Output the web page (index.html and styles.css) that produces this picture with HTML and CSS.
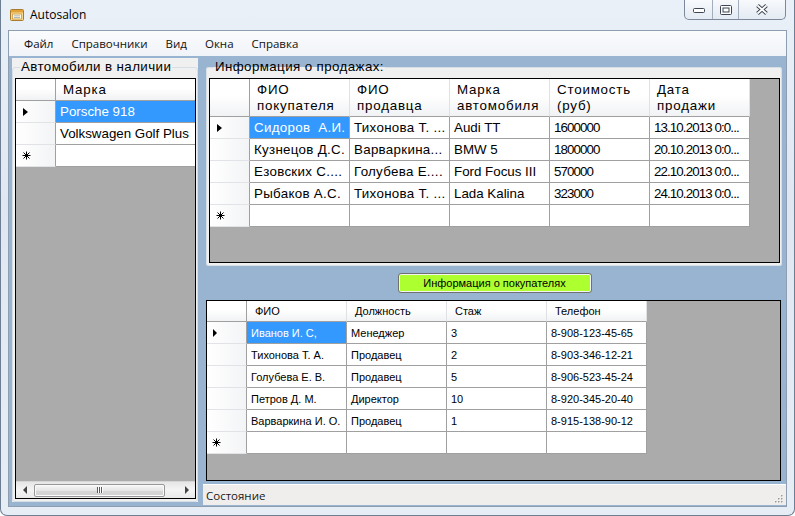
FILE: index.html
```html
<!DOCTYPE html>
<html lang="ru">
<head>
<meta charset="utf-8">
<title>Autosalon</title>
<link rel="stylesheet" href="styles.css">
</head>
<body>
<div class="window">
  <div class="titlebar">
    <svg class="app-icon" width="16" height="16" viewBox="0 0 16 16">
      <rect x="1.5" y="2.5" width="13" height="11" rx="1" fill="#f6d88c" stroke="#a97b2a"/>
      <rect x="2" y="3" width="12" height="2.5" fill="#e4a339"/>
      <rect x="3.5" y="7" width="9" height="5" fill="#fff6dc" stroke="#c99b45" stroke-width="0.8"/>
      <path d="M5 8.8h6M5 10.5h6" stroke="#9aa6b8" stroke-width="0.8"/>
    </svg>
    <span class="title">Autosalon</span>
    <div class="caption-btns">
      <div class="cbtn cbtn-min">
        <svg width="14" height="8" viewBox="0 0 14 8"><rect x="1.5" y="2.5" width="11" height="4" rx="1" fill="#fff" stroke="#3d4452"/></svg>
      </div>
      <div class="cbtn cbtn-max">
        <svg width="12" height="10" viewBox="0 0 12 10"><rect x="0.5" y="0.5" width="11" height="9" rx="1" fill="#fff" stroke="#3d4452"/><rect x="3" y="3" width="6" height="4" fill="#fff" stroke="#3d4452" stroke-width="1"/></svg>
      </div>
      <div class="cbtn cbtn-close">
        <svg width="14" height="11" viewBox="0 0 14 11"><path d="M2.5 1.5L11.5 9.5M11.5 1.5L2.5 9.5" stroke="#3d4452" stroke-width="3.8"/><path d="M2.5 1.5L11.5 9.5M11.5 1.5L2.5 9.5" stroke="#fff" stroke-width="1.8"/></svg>
      </div>
    </div>
  </div>

  <div class="client">
    <div class="menubar">
      <span class="menu-item">Файл</span>
      <span class="menu-item">Справочники</span>
      <span class="menu-item">Вид</span>
      <span class="menu-item">Окна</span>
      <span class="menu-item">Справка</span>
    </div>

    <div class="main">
      <div class="left">
        <fieldset class="group group-left">
          <legend>Автомобили в наличии</legend>
          <div class="dgv">
            <div class="grid grid-left">
              <div class="ch corner"></div>
              <div class="ch cyh">Марка</div>

              <div class="rh"><span class="cur"></span></div>
              <div class="c sel">Porsche 918</div>

              <div class="rh"></div>
              <div class="c">Volkswagen Golf Plus</div>

              <div class="rh"><svg class="star" width="9" height="9" viewBox="0 0 9 9"><path d="M4.5 0.5V8.5M0.5 4.5H8.5M1.5 1.5L7.5 7.5M7.5 1.5L1.5 7.5" stroke="#000" stroke-width="1"/></svg></div>
              <div class="c"></div>
            </div>
            <div class="hscroll">
              <div class="sb-btn"><span class="arr-l"></span></div>
              <div class="sb-track">
                <div class="sb-thumb"><span class="grip"></span><span class="grip"></span><span class="grip"></span></div>
              </div>
              <div class="sb-btn"><span class="arr-r"></span></div>
            </div>
          </div>
        </fieldset>
      </div>

      <div class="right">
        <fieldset class="group group-sales">
          <legend>Информация о продажах:</legend>
          <div class="dgv">
            <div class="grid grid-sales">
              <div class="ch corner"></div>
              <div class="ch cyh">ФИО<br>покупателя</div>
              <div class="ch cyh">ФИО<br>продавца</div>
              <div class="ch cyh">Марка<br>автомобиля</div>
              <div class="ch cyh">Стоимость<br>(руб)</div>
              <div class="ch cyh">Дата<br>продажи</div>

              <div class="rh"><span class="cur"></span></div>
              <div class="c cy sel">Сидоров&nbsp; А.И.</div>
              <div class="c cy">Тихонова Т. ...</div>
              <div class="c">Audi TT</div>
              <div class="c num">1600000</div>
              <div class="c num">13.10.2013 0:0...</div>

              <div class="rh"></div>
              <div class="c cy">Кузнецов Д.С.</div>
              <div class="c cy">Варваркина...</div>
              <div class="c">BMW 5</div>
              <div class="c num">1800000</div>
              <div class="c num">20.10.2013 0:0...</div>

              <div class="rh"></div>
              <div class="c cy">Езовских С....</div>
              <div class="c cy">Голубева Е....</div>
              <div class="c">Ford Focus III</div>
              <div class="c num">570000</div>
              <div class="c num">22.10.2013 0:0...</div>

              <div class="rh"></div>
              <div class="c cy">Рыбаков А.С.</div>
              <div class="c cy">Тихонова Т. ...</div>
              <div class="c">Lada Kalina</div>
              <div class="c num">323000</div>
              <div class="c num">24.10.2013 0:0...</div>

              <div class="rh"><svg class="star" width="9" height="9" viewBox="0 0 9 9"><path d="M4.5 0.5V8.5M0.5 4.5H8.5M1.5 1.5L7.5 7.5M7.5 1.5L1.5 7.5" stroke="#000" stroke-width="1"/></svg></div>
              <div class="c"></div>
              <div class="c"></div>
              <div class="c"></div>
              <div class="c"></div>
              <div class="c"></div>
            </div>
          </div>
        </fieldset>

        <div class="button-row">
          <button class="btn-green" type="button">Информация о покупателях</button>
        </div>

        <div class="dgv dgv-buyers">
          <div class="grid grid-buyers">
            <div class="ch corner"></div>
            <div class="ch">ФИО</div>
            <div class="ch">Должность</div>
            <div class="ch">Стаж</div>
            <div class="ch">Телефон</div>

            <div class="rh"><span class="cur cur-sm"></span></div>
            <div class="c sel">Иванов И. С,</div>
            <div class="c">Менеджер</div>
            <div class="c">3</div>
            <div class="c">8-908-123-45-65</div>

            <div class="rh"></div>
            <div class="c">Тихонова Т. А.</div>
            <div class="c">Продавец</div>
            <div class="c">2</div>
            <div class="c">8-903-346-12-21</div>

            <div class="rh"></div>
            <div class="c">Голубева Е. В.</div>
            <div class="c">Продавец</div>
            <div class="c">5</div>
            <div class="c">8-906-523-45-24</div>

            <div class="rh"></div>
            <div class="c">Петров Д. М.</div>
            <div class="c">Директор</div>
            <div class="c">10</div>
            <div class="c">8-920-345-20-40</div>

            <div class="rh"></div>
            <div class="c">Варваркина И. О.</div>
            <div class="c">Продавец</div>
            <div class="c">1</div>
            <div class="c">8-915-138-90-12</div>

            <div class="rh"><svg class="star" width="9" height="9" viewBox="0 0 9 9"><path d="M4.5 0.5V8.5M0.5 4.5H8.5M1.5 1.5L7.5 7.5M7.5 1.5L1.5 7.5" stroke="#000" stroke-width="1"/></svg></div>
            <div class="c"></div>
            <div class="c"></div>
            <div class="c"></div>
            <div class="c"></div>
          </div>
        </div>

        <div class="statusbar">
          <span class="status-text">Состояние</span>
          <svg class="size-grip" width="10" height="10" viewBox="0 0 10 10">
            <g fill="#fff"><rect x="9" y="3" width="1" height="1"/><rect x="9" y="6" width="1" height="1"/><rect x="6" y="6" width="1" height="1"/><rect x="9" y="9" width="1" height="1"/><rect x="6" y="9" width="1" height="1"/><rect x="3" y="9" width="1" height="1"/></g>
            <g fill="#9a9a9a"><rect x="8" y="2" width="1.5" height="1.5"/><rect x="8" y="5" width="1.5" height="1.5"/><rect x="5" y="5" width="1.5" height="1.5"/><rect x="8" y="8" width="1.5" height="1.5"/><rect x="5" y="8" width="1.5" height="1.5"/><rect x="2" y="8" width="1.5" height="1.5"/></g>
          </svg>
        </div>
      </div>
    </div>
  </div>
</div>
</body>
</html>
```

FILE: styles.css
```css
* {
  box-sizing: border-box;
}

html, body {
  margin: 0;
  padding: 0;
}

body {
  width: 795px;
  height: 516px;
  overflow: hidden;
  background: #ffffff;
  font-family: "Liberation Sans", Arial, sans-serif;
  color: #000;
}

.window {
  width: 795px;
  height: 516px;
  display: flex;
  flex-direction: column;
  background: linear-gradient(#e9f0f8 0%, #dfe8f2 40%, #e6edf5 100%);
  border: 1px solid #6d7d92;
  border-top: none;
  border-radius: 0 0 7px 7px;
}

/* ---------- title bar ---------- */
.titlebar {
  height: 30px;
  flex: none;
  display: flex;
  align-items: flex-start;
  padding: 0 8px 0 8px;
}

.app-icon {
  margin-top: 7px;
  flex: none;
}

.title {
  margin-left: 5px;
  margin-top: 6px;
  font-family: "Open Sans", "Noto Sans", sans-serif;
  font-size: 12px;
  line-height: 17px;
  color: #000;
}

.caption-btns {
  margin-left: auto;
  display: flex;
  height: 20px;
  border: 1px solid #7d899b;
  border-top: none;
  border-radius: 0 0 5px 5px;
  background: linear-gradient(#f7f9fc, #e4ebf3);
  overflow: hidden;
}

.cbtn {
  display: flex;
  align-items: center;
  justify-content: center;
  height: 100%;
}

.cbtn + .cbtn {
  border-left: 1px solid #a3aebd;
}

.cbtn-min { width: 27px; }
.cbtn-max { width: 26px; }
.cbtn-close { width: 47px; }

/* ---------- client ---------- */
.client {
  flex: 1;
  min-height: 0;
  margin: 0 7px 8px 7px;
  border: 1px solid #8f9db0;
  display: flex;
  flex-direction: column;
  background: #99b4d1;
}

.menubar {
  height: 25px;
  flex: none;
  display: flex;
  align-items: center;
  gap: 18px;
  padding-left: 15px;
  background: linear-gradient(#fafbfd, #f0f3f8);
  font-family: "Open Sans", "Noto Sans", sans-serif;
  font-size: 11.5px;
  color: #111;
}

.main {
  flex: 1;
  min-height: 0;
  display: flex;
  padding: 2px 0 0 3px;
}

.left {
  width: 186px;
  flex: none;
  margin-bottom: 4px;
  background: #f0f0f0;
  display: flex;
}

.right {
  flex: 1;
  min-width: 0;
  margin-left: 5px;
  display: flex;
  flex-direction: column;
  padding-bottom: 1px;
}

/* ---------- group boxes ---------- */
.group {
  margin: 0;
  padding: 2px 1px 2px 2px;
  border: 1px solid #d5dfe5;
  border-radius: 3px;
  background: #f0f0f0;
  display: flex;
  flex-direction: column;
  min-width: 0;
  min-height: 0;
}

.group legend {
  margin-left: 5px;
  padding: 0 1px;
  font-size: 13.33px;
  line-height: 18px;
  letter-spacing: 0.4px;
  color: #000;
}

.group-left {
  flex: 1;
}

.group-sales {
  height: 208px;
  flex: none;
  margin: 0 4px 0 3px;
}

/* ---------- data grid views ---------- */
.dgv {
  flex: 1;
  min-height: 0;
  border: 1px solid #000;
  background: #ababab;
  display: flex;
  flex-direction: column;
  overflow: hidden;
}

.grid {
  display: grid;
  font-size: 13.33px;
  flex: none;
}

.grid-left {
  grid-template-columns: 40px 140px;
  grid-template-rows: 22px repeat(3, 22px);
}

.grid-sales {
  grid-template-columns: 40px repeat(5, 100px);
  grid-template-rows: 38px repeat(5, 22px);
}

.grid-buyers {
  grid-template-columns: 40px repeat(4, 100px);
  grid-template-rows: 21px repeat(6, 22px);
  font-size: 11px;
}

.ch {
  display: flex;
  align-items: center;
  padding-left: 7px;
  line-height: 16px;
  white-space: nowrap;
  overflow: hidden;
  background: linear-gradient(#ffffff 0%, #ffffff 45%, #f1f2f4 100%);
  border-right: 1px solid #dfe1e4;
  border-bottom: 1px solid #a0a0a0;
}

.grid-buyers .ch {
  padding-left: 8px;
}

.ch.corner {
  border-right: 1px solid #a0a0a0;
}

.rh {
  display: flex;
  align-items: center;
  padding-left: 7px;
  background: linear-gradient(to right, #ffffff, #f3f4f6);
  border-right: 1px solid #a0a0a0;
  border-bottom: 1px solid #e1e3e6;
}

.grid-buyers .rh {
  padding-left: 6px;
}

.c {
  display: flex;
  align-items: center;
  padding-left: 4px;
  white-space: nowrap;
  overflow: hidden;
  background: #ffffff;
  border-right: 1px solid #a0a0a0;
  border-bottom: 1px solid #a0a0a0;
}

.cyh {
  letter-spacing: 0.8px;
}

.cy {
  letter-spacing: 0.3px;
}

.num {
  letter-spacing: -0.9px;
}

.sel {
  background: #3399ff;
  color: #ffffff;
}

.cur {
  display: block;
  width: 0;
  height: 0;
  border-left: 5px solid #000;
  border-top: 4px solid transparent;
  border-bottom: 4px solid transparent;
}

.cur-sm {
  border-left-width: 4px;
  border-top-width: 4px;
  border-bottom-width: 4px;
}

.star {
  display: block;
  margin-left: -1px;
}

/* ---------- horizontal scrollbar ---------- */
.hscroll {
  margin-top: auto;
  height: 17px;
  flex: none;
  display: flex;
  background: linear-gradient(#e6e6e6, #f4f4f4 50%, #e9e9e9);
  border-top: 1px solid #d6d6d6;
}

.sb-btn {
  width: 17px;
  flex: none;
  display: flex;
  align-items: center;
  justify-content: center;
}

.arr-l {
  width: 0;
  height: 0;
  border-right: 4px solid #444;
  border-top: 4px solid transparent;
  border-bottom: 4px solid transparent;
}

.arr-r {
  width: 0;
  height: 0;
  border-left: 4px solid #444;
  border-top: 4px solid transparent;
  border-bottom: 4px solid transparent;
}

.sb-track {
  flex: 1;
  display: flex;
  align-items: center;
  padding-left: 1px;
}

.sb-thumb {
  width: 131px;
  height: 13px;
  border: 1px solid #979797;
  border-radius: 2px;
  background: linear-gradient(#f6f6f6, #e6e6e6 50%, #d7d7d7 51%, #d2d2d2);
  box-shadow: inset 0 0 0 1px #fbfbfb;
  display: flex;
  align-items: center;
  justify-content: center;
  gap: 1px;
}

.grip {
  width: 1px;
  height: 6px;
  background: #5a5a5a;
  box-shadow: 1px 0 0 #fff;
}

/* ---------- button ---------- */
.button-row {
  height: 34px;
  flex: none;
  display: flex;
  justify-content: center;
  align-items: flex-start;
  padding-top: 7px;
}

.btn-green {
  width: 194px;
  height: 20px;
  margin: 0;
  padding: 0;
  border: 1px solid #707070;
  border-radius: 3px;
  background: #adff2f;
  box-shadow: inset 0 0 0 1px #f4f4f4;
  font-family: "Liberation Sans", Arial, sans-serif;
  font-size: 11px;
  color: #000;
}

/* ---------- bottom grid ---------- */
.dgv-buyers {
  flex: none;
  height: 181px;
  margin: 0 5px 0 3px;
}

/* ---------- status bar ---------- */
.statusbar {
  height: 21px;
  flex: none;
  margin-top: 3px;
  display: flex;
  align-items: center;
  padding-left: 3px;
  background: #f0eeec;
  border-top: 1px solid #ffffff;
  font-family: "Open Sans", "Noto Sans", sans-serif;
  font-size: 11.5px;
  color: #1a1a1a;
}

.size-grip {
  margin-left: auto;
  margin-right: 3px;
  align-self: flex-end;
  margin-bottom: 2px;
}
```
